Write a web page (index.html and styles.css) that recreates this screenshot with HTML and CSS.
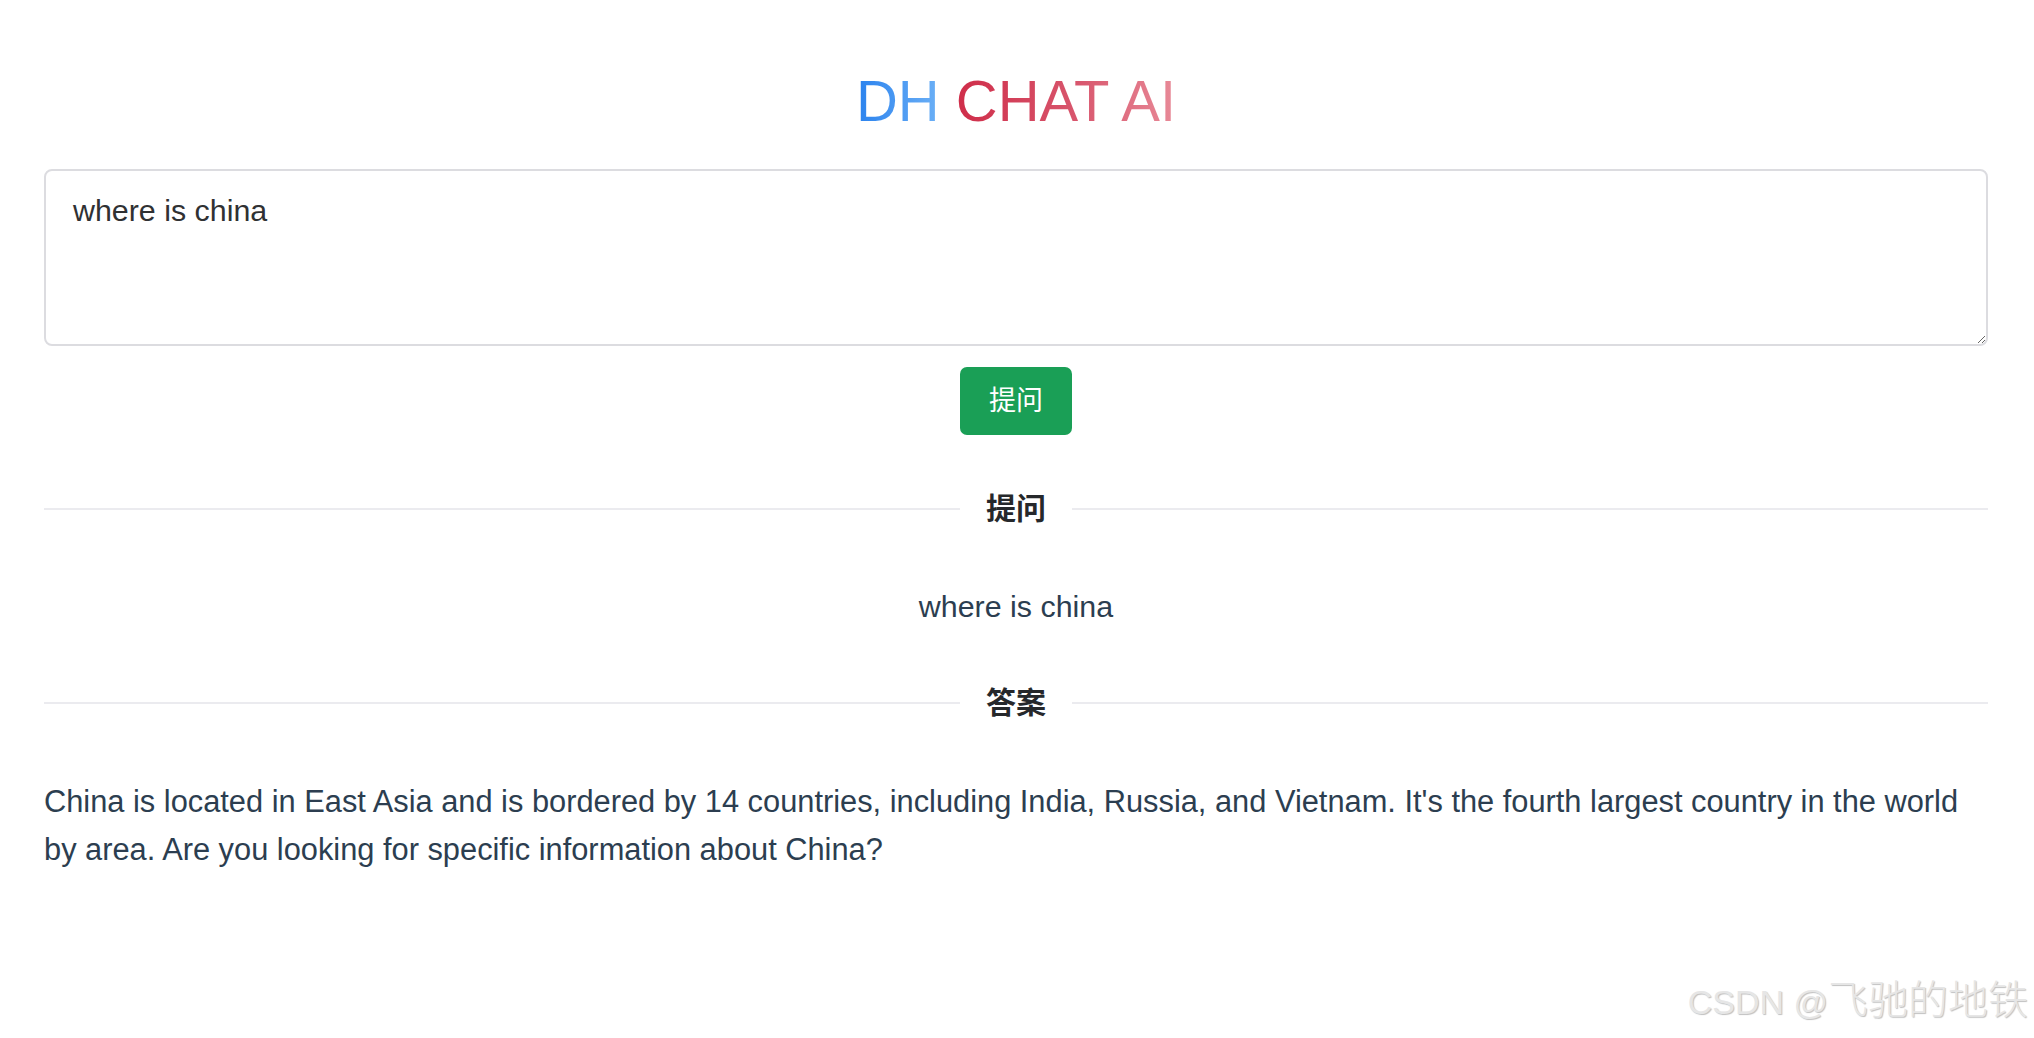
FILE: index.html
```html
<!DOCTYPE html>
<html lang="zh-CN">
<head>
<meta charset="utf-8">
<title>DH CHAT AI</title>
<link rel="stylesheet" href="styles.css">
</head>
<body>
<div class="app">
  <h1 class="title"><span class="t-blue">DH</span> <span class="t-red">CHAT AI</span></h1>
  <textarea class="ask-input">where is china</textarea>
  <button class="ask-btn" type="button">提问</button>
  <div class="divider"><span class="divider-line"></span><span class="divider-text">提问</span><span class="divider-line"></span></div>
  <p class="question">where is china</p>
  <div class="divider"><span class="divider-line"></span><span class="divider-text">答案</span><span class="divider-line"></span></div>
  <p class="answer">China is located in East Asia and is bordered by 14 countries, including India, Russia, and Vietnam. It's the fourth largest country in the world by area. Are you looking for specific information about China?</p>
</div>
<div class="watermark"><span class="wm-latin">CSDN @</span><span class="wm-cjk">飞驰的地铁</span></div>
</body>
</html>
```
FILE: styles.css
```css
html, body {
  margin: 0;
  padding: 0;
  background: #ffffff;
}
body {
  font-family: "Liberation Sans", "Noto Sans CJK SC", Arial, sans-serif;
  color: #2c3e50;
  height: 1038px;
  overflow: hidden;
  position: relative;
}
.app {
  width: 1944px;
  margin: 0 0 0 44px;
  padding-top: 67px;
  display: flex;
  flex-direction: column;
}
.title {
  margin: 0;
  height: 68px;
  line-height: 68px;
  font-size: 58px;
  font-weight: 400;
  text-align: center;
  font-family: "Liberation Sans", Arial, sans-serif;
}
.t-blue {
  background: linear-gradient(to right, #2a82ee, #6cb0f6);
  -webkit-background-clip: text;
  background-clip: text;
  color: transparent;
}
.t-red {
  background: linear-gradient(to right, #cf2d49, #d8566d 55%, #e88a98);
  -webkit-background-clip: text;
  background-clip: text;
  color: transparent;
}
.ask-input {
  margin-top: 34px;
  box-sizing: border-box;
  width: 1944px;
  height: 177px;
  border: 2px solid #dcdce0;
  border-radius: 8px;
  padding: 17px 27px;
  font-family: "Liberation Sans", Arial, sans-serif;
  font-size: 30.4px;
  line-height: 45px;
  color: #303133;
  resize: vertical;
  outline: none;
}
.ask-btn {
  align-self: center;
  margin-top: 21px;
  width: 112px;
  height: 68px;
  border: none;
  border-radius: 7px;
  background: #1a9f56;
  color: #ffffff;
  font-family: "Noto Sans CJK SC", sans-serif;
  font-size: 27px;
  padding: 0 0 5px;
  cursor: pointer;
}
.divider {
  display: flex;
  align-items: center;
  height: 48px;
  margin-top: 50px;
}
.divider-line {
  flex: 1;
  height: 2px;
  background: #ebebef;
}
.divider-text {
  padding: 0 26px 6px;
  font-family: "Noto Sans CJK SC", sans-serif;
  font-weight: 700;
  font-size: 30px;
  color: #26282b;
  line-height: 42px;
}
.question {
  margin: 51px 0 0;
  text-align: center;
  font-size: 30.4px;
  line-height: 45px;
}
.question + .divider {
  margin-top: 50px;
}
.answer {
  margin: 51px 0 0;
  font-size: 30.8px;
  line-height: 48px;
}
.watermark {
  position: absolute;
  right: 6px;
  bottom: 12px;
  color: #e6e6e6;
  text-shadow: 1px 1px 1px #c0c0c0;
  white-space: nowrap;
  display: flex;
  align-items: baseline;
}
.wm-latin {
  font-family: "Liberation Sans", Arial, sans-serif;
  font-size: 34px;
}
.wm-cjk {
  font-family: "Noto Sans CJK SC", sans-serif;
  font-weight: 300;
  font-size: 40px;
}
```
